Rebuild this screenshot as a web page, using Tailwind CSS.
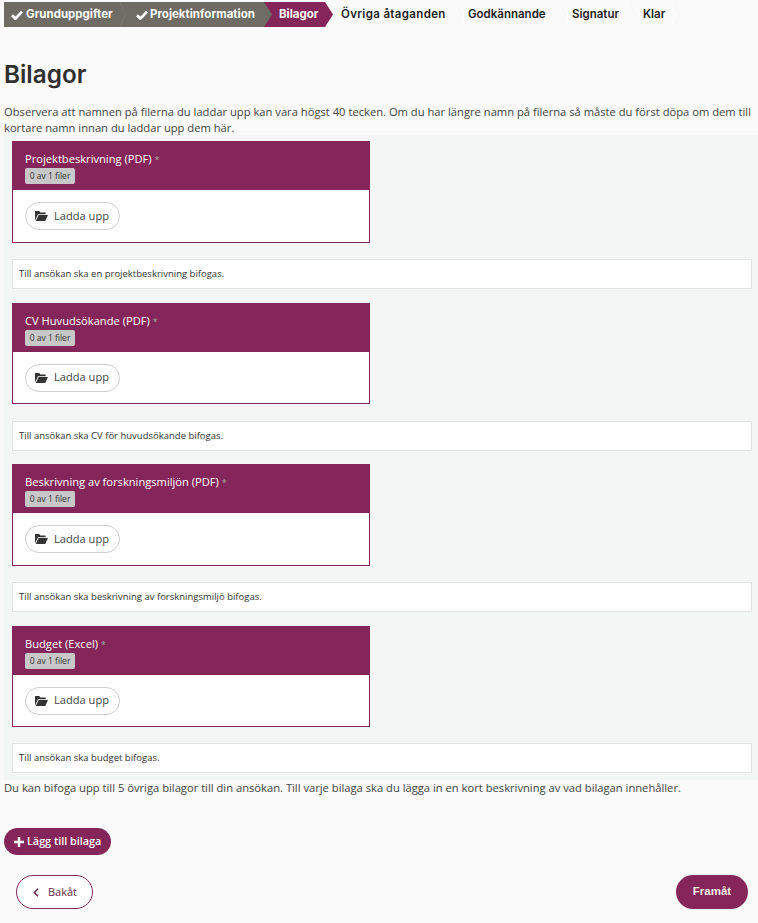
<!DOCTYPE html>
<html lang="sv">
  <head>
    <meta charset="UTF-8" />
    <title>Bilagor</title>
    <script src="https://cdn.jsdelivr.net/npm/@tailwindcss/browser@4"></script>
  </head>
  <body class="bg-[#fafafa] text-[#444] font-['Open_Sans',sans-serif] w-[758px] h-[923px] overflow-hidden">
    <!-- steps -->
    <div class="flex items-stretch h-[25px] mt-[2px] ml-[4px] font-['Inter',sans-serif] text-[11.5px] whitespace-nowrap">
      <div class="flex items-center justify-between w-[122px] pl-[7px] bg-[#6e6c64] text-white font-bold">
        <span class="flex items-center gap-[3px]">
          <svg class="w-[12px] h-[10px]" viewBox="0 0 12 10"><path d="M1 5.2 4.4 8.6 11 1.6" fill="none" stroke="currentColor" stroke-width="2.8" /></svg>
          Grunduppgifter
        </span>
        <svg class="w-[6px] h-[25px]" viewBox="0 0 6 25"><path d="M0 0 5.5 12.5 0 25" fill="none" stroke="#787670" /></svg>
      </div>
      <div class="flex items-center gap-[2px] w-[146px] pl-[10px] bg-[#6e6c64] text-white font-bold">
        <svg class="w-[12px] h-[10px]" viewBox="0 0 12 10"><path d="M1 5.2 4.4 8.6 11 1.6" fill="none" stroke="currentColor" stroke-width="2.8" /></svg>
        Projektinformation
      </div>
      <div class="flex items-center w-[69px] -ml-[8px] pl-[15px] bg-[#85265a] text-white font-bold [clip-path:polygon(0_0,61px_0,69px_50%,61px_100%,0_100%,8px_50%)]">Bilagor</div>
      <div class="flex items-center justify-between w-[129px] pl-[8px] text-[#1e1e1e] font-semibold tracking-[0.35px]">
        Övriga åtaganden
        <svg class="w-[6px] h-[25px]" viewBox="0 0 6 25"><path d="M0 0 5.5 12.5 0 25" fill="none" stroke="#f6f6f6" /></svg>
      </div>
      <div class="flex items-center justify-between w-[104px] pl-[6px] text-[#1e1e1e] font-semibold">
        Godkännande
        <svg class="w-[6px] h-[25px]" viewBox="0 0 6 25"><path d="M0 0 5.5 12.5 0 25" fill="none" stroke="#f6f6f6" /></svg>
      </div>
      <div class="flex items-center justify-between w-[70px] pl-[6px] text-[#1e1e1e] font-semibold">
        Signatur
        <svg class="w-[6px] h-[25px]" viewBox="0 0 6 25"><path d="M0 0 5.5 12.5 0 25" fill="none" stroke="#f6f6f6" /></svg>
      </div>
      <div class="flex items-center justify-between w-[44px] pl-[7px] text-[#1e1e1e] font-semibold">
        Klar
        <svg class="w-[6px] h-[25px]" viewBox="0 0 6 25"><path d="M0 0 5.5 12.5 0 25" fill="none" stroke="#f6f6f6" /></svg>
      </div>
    </div>

    <h1 class="mt-[31px] ml-[4px] font-['Inter',sans-serif] font-semibold text-[24.3px] leading-[32px] text-[#2f2f2f]">Bilagor</h1>

    <p class="mt-[14px] ml-[4px] text-[11.2px] leading-[16px] w-[752px]">Observera att namnen på filerna du laddar upp kan vara högst 40 tecken. Om du har längre namn på filerna så måste du först döpa om dem till kortare namn innan du laddar upp dem här.</p>

    <!-- attachments -->
    <div class="-mt-[1px] ml-[4px] pl-[8px] pr-[6px] pt-[6.1px] h-[645px] bg-[#f4f5f5]">
      <section class="w-[358px] h-[101.5px] bg-white border border-[#85265a]">
        <div class="h-[49px] -mt-px -mx-px bg-[#85265a] pl-[13px] pt-[10px]">
          <div class="text-[11.15px] leading-[16px] text-white">Projektbeskrivning (PDF) <span class="text-[9px] leading-none text-[#a8a8a8]">*</span></div>
          <span class="block w-[50px] h-[16px] mt-[1px] rounded-[2px] bg-[#c8c8c8] text-center text-[8.5px] leading-[16px] text-[#333]">0 av 1 filer</span>
        </div>
        <button class="flex items-center gap-[6px] h-[28px] w-[95px] ml-[12px] mt-[12px] pl-[9px] rounded-full border border-[#cfcfcf] text-[11.1px] text-[#444]">
          <svg class="w-[13px] h-[10px]" viewBox="0 0 13 10"><path d="M0 9.5V0h4.2l1.2 1.4h5.2v1.8H3L0 9.5Zm.8.5L3.6 4H13l-2.8 6Z" fill="#333" /></svg>
          Ladda upp
        </button>
      </section>
      <div class="w-[740px] h-[30px] mt-[16.9px] mb-[13.1px] pl-[6px] bg-white border border-[#e2e2e2] text-[9.5px] leading-[28px] text-[#333]">Till ansökan ska en projektbeskrivning bifogas.</div>

      <section class="w-[358px] h-[101.5px] bg-white border border-[#85265a]">
        <div class="h-[49px] -mt-px -mx-px bg-[#85265a] pl-[13px] pt-[10px]">
          <div class="text-[11.15px] leading-[16px] text-white">CV Huvudsökande (PDF) <span class="text-[9px] leading-none text-[#a8a8a8]">*</span></div>
          <span class="block w-[50px] h-[16px] mt-[1px] rounded-[2px] bg-[#c8c8c8] text-center text-[8.5px] leading-[16px] text-[#333]">0 av 1 filer</span>
        </div>
        <button class="flex items-center gap-[6px] h-[28px] w-[95px] ml-[12px] mt-[12px] pl-[9px] rounded-full border border-[#cfcfcf] text-[11.1px] text-[#444]">
          <svg class="w-[13px] h-[10px]" viewBox="0 0 13 10"><path d="M0 9.5V0h4.2l1.2 1.4h5.2v1.8H3L0 9.5Zm.8.5L3.6 4H13l-2.8 6Z" fill="#333" /></svg>
          Ladda upp
        </button>
      </section>
      <div class="w-[740px] h-[30px] mt-[16.9px] mb-[13.1px] pl-[6px] bg-white border border-[#e2e2e2] text-[9.5px] leading-[28px] text-[#333]">Till ansökan ska CV för huvudsökande bifogas.</div>

      <section class="w-[358px] h-[101.5px] bg-white border border-[#85265a]">
        <div class="h-[49px] -mt-px -mx-px bg-[#85265a] pl-[13px] pt-[10px]">
          <div class="text-[11.15px] leading-[16px] text-white">Beskrivning av forskningsmiljön (PDF) <span class="text-[9px] leading-none text-[#a8a8a8]">*</span></div>
          <span class="block w-[50px] h-[16px] mt-[1px] rounded-[2px] bg-[#c8c8c8] text-center text-[8.5px] leading-[16px] text-[#333]">0 av 1 filer</span>
        </div>
        <button class="flex items-center gap-[6px] h-[28px] w-[95px] ml-[12px] mt-[12px] pl-[9px] rounded-full border border-[#cfcfcf] text-[11.1px] text-[#444]">
          <svg class="w-[13px] h-[10px]" viewBox="0 0 13 10"><path d="M0 9.5V0h4.2l1.2 1.4h5.2v1.8H3L0 9.5Zm.8.5L3.6 4H13l-2.8 6Z" fill="#333" /></svg>
          Ladda upp
        </button>
      </section>
      <div class="w-[740px] h-[30px] mt-[16.9px] mb-[13.1px] pl-[6px] bg-white border border-[#e2e2e2] text-[9.5px] leading-[28px] text-[#333]">Till ansökan ska beskrivning av forskningsmiljö bifogas.</div>

      <section class="w-[358px] h-[101.5px] bg-white border border-[#85265a]">
        <div class="h-[49px] -mt-px -mx-px bg-[#85265a] pl-[13px] pt-[10px]">
          <div class="text-[11.15px] leading-[16px] text-white">Budget (Excel) <span class="text-[9px] leading-none text-[#a8a8a8]">*</span></div>
          <span class="block w-[50px] h-[16px] mt-[1px] rounded-[2px] bg-[#c8c8c8] text-center text-[8.5px] leading-[16px] text-[#333]">0 av 1 filer</span>
        </div>
        <button class="flex items-center gap-[6px] h-[28px] w-[95px] ml-[12px] mt-[12px] pl-[9px] rounded-full border border-[#cfcfcf] text-[11.1px] text-[#444]">
          <svg class="w-[13px] h-[10px]" viewBox="0 0 13 10"><path d="M0 9.5V0h4.2l1.2 1.4h5.2v1.8H3L0 9.5Zm.8.5L3.6 4H13l-2.8 6Z" fill="#333" /></svg>
          Ladda upp
        </button>
      </section>
      <div class="w-[740px] h-[30px] mt-[16.2px] pl-[6px] bg-white border border-[#e2e2e2] text-[9.5px] leading-[28px] text-[#333]">Till ansökan ska budget bifogas.</div>
    </div>

    <p class="ml-[4px] text-[11.2px] leading-[16px]">Du kan bifoga upp till 5 övriga bilagor till din ansökan. Till varje bilaga ska du lägga in en kort beskrivning av vad bilagan innehåller.</p>

    <button class="flex items-center gap-[3px] h-[27px] w-[107px] mt-[32px] ml-[4px] pl-[10px] rounded-full bg-[#85265a] text-[10.8px] font-semibold text-white">
      <svg class="w-[10px] h-[10px]" viewBox="0 0 10 10"><path d="M5 0v10M0 5h10" stroke="#fff" stroke-width="2.4" /></svg>
      Lägg till bilaga
    </button>

    <div class="flex justify-between mt-[20px] ml-[16px] mr-[10px]">
      <button class="flex items-center gap-[9px] h-[34px] w-[77px] pl-[16px] rounded-full border border-[#85265a] bg-white text-[11px] text-[#6d2a50]">
        <svg class="w-[6px] h-[9px]" viewBox="0 0 6 9"><path d="M5 .8 1.4 4.5 5 8.2" fill="none" stroke="#6d2a50" stroke-width="1.6" /></svg>
        Bakåt
      </button>
      <button class="h-[34px] w-[72px] rounded-full bg-[#85265a] text-[11.5px] font-bold text-[#f6eee6] font-['Liberation_Sans',sans-serif]">Framåt</button>
    </div>
  </body>
</html>
